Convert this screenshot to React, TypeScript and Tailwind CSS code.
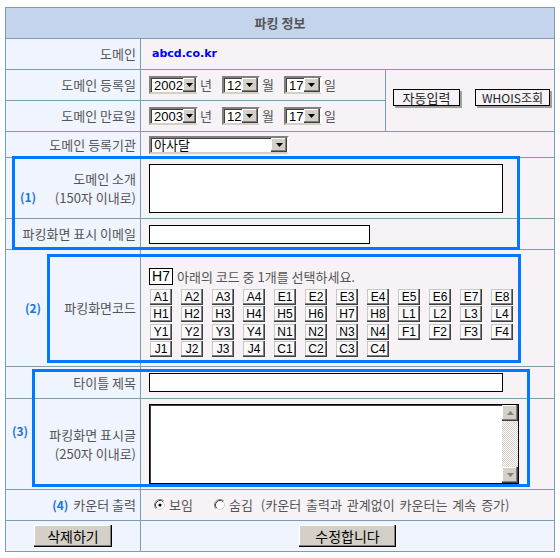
import React from "react";

const codes = [
  "A1", "A2", "A3", "A4", "E1", "E2", "E3", "E4", "E5", "E6", "E7", "E8",
  "H1", "H2", "H3", "H4", "H5", "H6", "H7", "H8", "L1", "L2", "L3", "L4",
  "Y1", "Y2", "Y3", "Y4", "N1", "N2", "N3", "N4", "F1", "F2", "F3", "F4",
  "J1", "J2", "J3", "J4", "C1", "C2", "C3", "C4",
];

// label cell (left column); layout classes are passed in whole so nothing conflicts
function Label({ children, className = "justify-end" }: { children: React.ReactNode; className?: string }) {
  return (
    <div className={`flex items-center bg-[#eff4fe] pr-[4px] text-[13px] text-[#555] ${className}`}>
      {children}
    </div>
  );
}

function Cell({ children, className = "items-center pl-[8px]" }: { children?: React.ReactNode; className?: string }) {
  return <div className={`flex bg-[#f6f2f6] ${className}`}>{children}</div>;
}

function DropArrow() {
  return (
    <svg width="7" height="4" viewBox="0 0 7 4">
      <path d="M0 0H7L3.5 4Z" fill="#000" />
    </svg>
  );
}

function Select({ value, width }: { value: string; width: string }) {
  return (
    <div
      className={`flex h-[18px] ${width} border-2 border-t-[#808080] border-l-[#808080] border-r-white border-b-[#d4d0c8] bg-white shadow-[inset_1px_1px_0_#404040]`}
    >
      <span className="flex-1 pl-[3px] pt-[1px] font-['Liberation_Sans',sans-serif] text-[13px] leading-[13px] text-black">
        {value}
      </span>
      <span className="flex w-[16px] items-center justify-center bg-[#d4d0c8] shadow-[inset_-1px_-1px_0_#404040,inset_-2px_-2px_0_#808080,inset_1px_1px_0_#ffffff]">
        <DropArrow />
      </span>
    </div>
  );
}

function Radio({ checked }: { checked?: boolean }) {
  return (
    <svg width="12" height="12" viewBox="0 0 12 12">
      <circle cx="6" cy="6" r="5" fill="#fff" />
      <path d="M2.11 9.89A5.5 5.5 0 0 1 9.89 2.11" fill="none" stroke="#808080" />
      <path d="M9.89 2.11A5.5 5.5 0 0 1 2.11 9.89" fill="none" stroke="#fff" />
      <path d="M2.82 9.18A4.5 4.5 0 0 1 9.18 2.82" fill="none" stroke="#404040" />
      <path d="M9.18 2.82A4.5 4.5 0 0 1 2.82 9.18" fill="none" stroke="#d4d0c8" />
      {checked && <circle cx="6" cy="6" r="1.6" fill="#000" />}
    </svg>
  );
}

function ScrollBtn({ up }: { up?: boolean }) {
  return (
    <div className="flex h-[16px] w-[16px] items-center justify-center bg-[#d4d0c8] shadow-[inset_-1px_-1px_0_#404040,inset_-2px_-2px_0_#808080,inset_1px_1px_0_#ffffff]">
      <svg width="7" height="4" viewBox="0 0 7 4">
        <path d={up ? "M0 4H7L3.5 0Z" : "M0 0H7L3.5 4Z"} fill="#808080" />
      </svg>
    </div>
  );
}

function DateRow({ year }: { year: string }) {
  return (
    <Cell>
      <Select value={year} width="w-[49px]" />
      <span className="ml-[2px] mr-[10px] text-[13px] text-[#555]">년</span>
      <Select value="12" width="w-[38px]" />
      <span className="ml-[2px] mr-[10px] text-[13px] text-[#555]">월</span>
      <Select value="17" width="w-[38px]" />
      <span className="ml-[2px] text-[13px] text-[#555]">일</span>
    </Cell>
  );
}

export default function App() {
  return (
    <div className="h-[558px] w-[560px] overflow-hidden bg-white pl-[5px] pt-[7px] font-['Noto_Sans_CJK_KR',sans-serif]">
      <div className="relative w-[550px]">
        <div className="grid grid-cols-[134px_244px_168px] grid-rows-[30px_30px_30px_30px_25px_60px_30px_116px_31px_90px_30px_30px] gap-px bg-[#7a9db2] p-px">
          {/* header */}
          <div className="col-span-3 flex items-center justify-center bg-[#c5d4ed] text-[13px] font-bold text-[#555]">
            파킹 정보
          </div>

          <Label>도메인</Label>
          <Cell className="col-span-2 items-center pl-[11px]">
            <span className="font-['DejaVu_Sans',sans-serif] text-[11px] font-bold text-[#0000ff]">abcd.co.kr</span>
          </Cell>

          <Label>도메인 등록일</Label>
          <DateRow year="2002" />
          <Cell className="row-span-2 items-center pb-[6px] pl-[7px]">
            <button className="h-[17px] w-[67px] border border-black bg-[#f6f2f6] text-[13px] leading-[15px] text-[#222] shadow-[2px_2px_0_#a0a0a0]">
              자동입력
            </button>
            <button className="ml-[15px] h-[17px] w-[75px] border border-black bg-[#f6f2f6] text-[12px] leading-[15px] text-[#222] shadow-[2px_2px_0_#a0a0a0]">
              WHOIS조회
            </button>
          </Cell>

          <Label>도메인 만료일</Label>
          <DateRow year="2003" />

          <Label>도메인 등록기관</Label>
          <Cell className="col-span-2 items-center pl-[8px]">
            <div className="flex h-[18px] w-[140px] border-2 border-t-[#808080] border-l-[#808080] border-r-white border-b-[#d4d0c8] bg-white shadow-[inset_1px_1px_0_#404040]">
              <span className="flex-1 pl-[3px] text-[13px] leading-[14px] text-black">아사달</span>
              <span className="flex w-[16px] items-center justify-center bg-[#d4d0c8] shadow-[inset_-1px_-1px_0_#404040,inset_-2px_-2px_0_#808080,inset_1px_1px_0_#ffffff]">
                <DropArrow />
              </span>
            </div>
          </Cell>

          <Label className="justify-between pl-[14px]">
            <span className="pt-[18px] text-[12px] font-bold text-[#1874e0]">(1)</span>
            <span className="text-right leading-[19px]">
              도메인 소개
              <br />
              (150자 이내로)
            </span>
          </Label>
          <Cell className="col-span-2 items-center pl-[8px]">
            <div className="h-[49px] w-[354px] border border-black bg-white" />
          </Cell>

          <Label>파킹화면 표시 이메일</Label>
          <Cell className="col-span-2 items-center pl-[8px]">
            <div className="h-[19px] w-[221px] border border-black bg-white" />
          </Cell>

          <Label className="justify-between pl-[19px]">
            <span className="text-[12px] font-bold text-[#1874e0]">(2)</span>
            <span>파킹화면코드</span>
          </Label>
          <Cell className="col-span-2 flex-col items-start pl-[8px] pt-[17px]">
            <div className="flex items-center">
              <span className="flex h-[17px] w-[24px] items-center justify-center border border-black bg-white font-['Liberation_Sans',sans-serif] text-[14px] text-black">
                H7
              </span>
              <span className="ml-[4px] text-[13px] text-[#555]">아래의 코드 중 1개를 선택하세요.</span>
            </div>
            <div className="ml-[1px] mt-[2px] grid grid-cols-[repeat(12,22px)] gap-x-[9px] gap-y-[1.5px]">
              {codes.map((c) => (
                <span
                  key={c}
                  className="flex h-[16px] items-center justify-center bg-[#fafafa] font-['Liberation_Sans',sans-serif] text-[12px] text-black shadow-[inset_-1px_-1px_0_#404040,inset_-2px_-2px_0_#808080,inset_1px_1px_0_#c8c8c8]"
                >
                  {c}
                </span>
              ))}
            </div>
          </Cell>

          <Label>타이틀 제목</Label>
          <Cell className="col-span-2 items-center pl-[8px]">
            <div className="h-[19px] w-[354px] border border-black bg-white" />
          </Cell>

          <Label className="justify-between pl-[6px]">
            <span className="pb-[26px] text-[12px] font-bold text-[#1874e0]">(3)</span>
            <span className="text-right leading-[19px]">
              파킹화면 표시글
              <br />
              (250자 이내로)
            </span>
          </Label>
          <Cell className="col-span-2 items-center pl-[8px]">
            <div className="flex h-[80px] w-[370px] border border-black bg-white shadow-[inset_1px_1px_0_#404040]">
              <div className="flex-1" />
              <div className="flex w-[16px] flex-col">
                <ScrollBtn up />
                <div className="flex-1 bg-[repeating-conic-gradient(#d4d0c8_0%_25%,#ffffff_0%_50%)] bg-size-[2px_2px]" />
                <ScrollBtn />
              </div>
            </div>
          </Cell>

          <Label>
            <span className="mr-[5px] text-[12px] font-bold text-[#1874e0]">(4)</span>
            카운터 출력
          </Label>
          <Cell className="col-span-2 items-center pl-[13px] text-[13px] text-[#555]">
            <Radio checked />
            <span className="ml-[3px]">보임</span>
            <span className="ml-[21px] flex">
              <Radio />
            </span>
            <span className="ml-[3px]">숨김</span>
            <span className="ml-[8px] [word-spacing:2px]">(카운터 출력과 관계없이 카운터는 계속 증가)</span>
          </Cell>

          <div className="flex items-center justify-center bg-[#eff4fe]">
            <button className="h-[22px] w-[78px] bg-[#d4d0c8] text-[14px] leading-[20px] text-black shadow-[inset_-1px_-1px_0_#000000,inset_-2px_-2px_0_#808080,inset_1px_1px_0_#ffffff]">
              삭제하기
            </button>
          </div>
          <div className="col-span-2 flex items-center justify-center bg-[#eff4fe]">
            <button className="h-[22px] w-[97px] bg-[#d4d0c8] text-[14px] leading-[20px] text-black shadow-[inset_-1px_-1px_0_#000000,inset_-2px_-2px_0_#808080,inset_1px_1px_0_#ffffff]">
              수정합니다
            </button>
          </div>
        </div>

        {/* highlight boxes */}
        <div className="pointer-events-none absolute left-[7px] top-[149px] h-[94px] w-[508px] border-[3px] border-[#0078ff]" />
        <div className="pointer-events-none absolute left-[42px] top-[247px] h-[109px] w-[474px] border-[3px] border-[#0078ff]" />
        <div className="pointer-events-none absolute left-[27px] top-[362px] h-[118px] w-[498px] border-[3px] border-[#0078ff]" />
      </div>
    </div>
  );
}
